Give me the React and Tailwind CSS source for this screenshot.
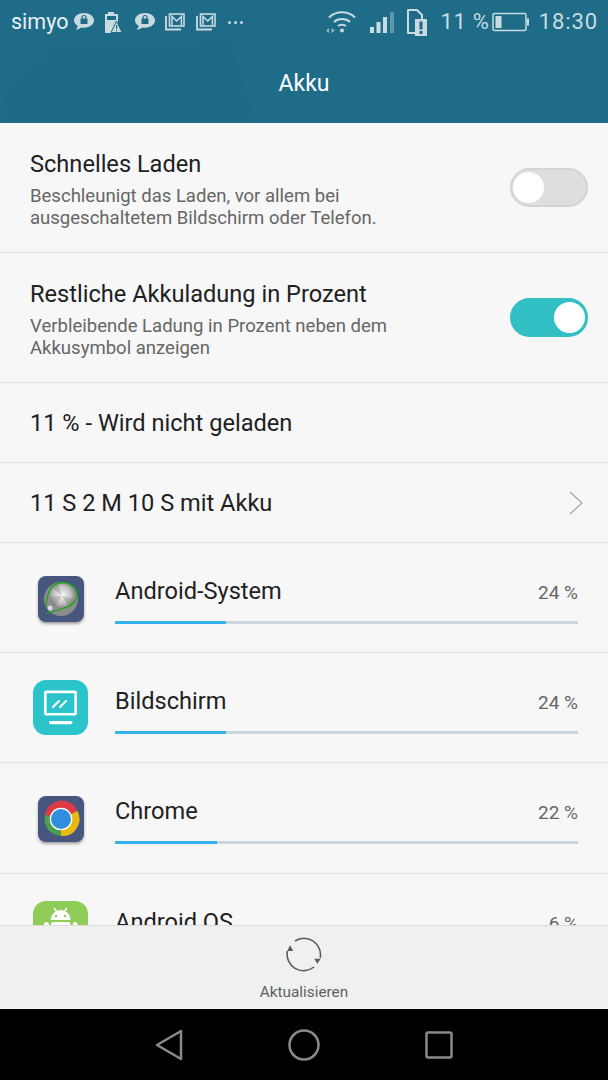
import React from 'react';

const StatusBubble = ({ className }) => (
  <svg width="22" height="20" viewBox="0 0 22 20" className={className}>
    <path d="M11 1C5.500 1 1 4.200 1 8.300c0 2.400 1.500 4.400 3.800 5.700-.3 1.500-1.200 2.700-2.200 3.600 2.200-.2 4.200-1 5.600-2.200 1 .2 1.800.3 2.800.3 5.500 0 10-3.300 10-7.400S16.500 1 11 1z" fill="#c9dbe1" />
    <rect x="7.500" y="6.500" width="7" height="5.500" rx="0.500" fill="#1e6b87" />
    <path d="M9 7V5.500a2 2 0 0 1 4 0V7" fill="none" stroke="#1e6b87" strokeWidth="1.200" />
  </svg>
);

const StatusMail = () => (
  <svg width="20" height="18" viewBox="0 0 20 18" className="mr-[11px]">
    <path d="M1 3v13.500h15" fill="none" stroke="#c9dbe1" strokeWidth="1.800" />
    <rect x="4.500" y="1" width="14.500" height="12" fill="none" stroke="#c9dbe1" strokeWidth="1.600" />
    <path d="M7 12V3.500l4.700 4.500 4.700-4.500V12" fill="none" stroke="#c9dbe1" strokeWidth="1.500" />
  </svg>
);

const StatusBar = () => (
  <div className="flex h-[44px] items-center pl-[11px] pr-[10px]">
    <span className="mr-[5px] text-[21.500px] leading-none text-[#e8f0f3]">simyo</span>
    <StatusBubble className="mr-[9px]" />
    <svg width="18" height="21" viewBox="0 0 18 21" className="mr-[12px]">
      <path d="M4 0h6v2h4v19H1V2h3z" fill="#c9dbe1" />
      <rect x="3" y="4" width="9" height="4" fill="#1e6b87" />
      <path d="M12.500 9l5.500 11.500H7z" fill="#c9dbe1" stroke="#1e6b87" strokeWidth="1" />
      <rect x="12" y="13" width="1.200" height="4" fill="#1e6b87" />
      <rect x="12" y="18" width="1.200" height="1.200" fill="#1e6b87" />
    </svg>
    <StatusBubble className="mr-[9px]" />
    <StatusMail />
    <StatusMail />
    <div className="ml-[1px] flex gap-[3px]">
      <span className="h-[3px] w-[3px] rounded-full bg-[#c9dbe1]" />
      <span className="h-[3px] w-[3px] rounded-full bg-[#c9dbe1]" />
      <span className="h-[3px] w-[3px] rounded-full bg-[#c9dbe1]" />
    </div>
    <div className="flex-1" />
    <svg width="30" height="22" viewBox="0 0 30 22" className="mr-[14px]">
      <path d="M3 6.500C10-.5 22-.5 29 6.500M8 11c4-4 12-4 16 0M12 15c2-1.800 6-1.800 8 0" fill="none" stroke="#c9dbe1" strokeWidth="2" />
      <circle cx="16" cy="19.500" r="2" fill="#c9dbe1" />
      <path d="M3 17v5l-3-2.500zM5.500 17v5l3.500-2.500z" fill="#8fb4c2" />
    </svg>
    <svg width="24" height="21" viewBox="0 0 24 21" className="mr-[12px]">
      <rect x="0" y="15" width="4" height="6" fill="#c9dbe1" />
      <rect x="6.500" y="10" width="4" height="11" fill="#c9dbe1" />
      <rect x="13" y="5" width="4" height="16" fill="#c9dbe1" />
      <rect x="20" y="0" width="4" height="21" fill="#5f98ad" />
    </svg>
    <svg width="21" height="27" viewBox="0 0 21 27" className="mr-[13px]">
      <path d="M2 1h9l5 5v18H2z" fill="#1e6b87" stroke="#c9dbe1" strokeWidth="2" strokeLinejoin="round" />
      <path d="M9 10h12v17H9z" fill="#c9dbe1" />
      <rect x="13.500" y="12.500" width="3" height="8" fill="#1e6b87" />
      <rect x="13.500" y="22" width="3" height="3" fill="#1e6b87" />
    </svg>
    <span className="mr-[2px] text-[22px] leading-none tracking-[0.75px] text-[#c9dbe1]">11 %</span>
    <svg width="38" height="20" viewBox="0 0 38 20" className="mr-[9px]">
      <rect x="1" y="1.500" width="33" height="17" rx="1.500" fill="none" stroke="#c9dbe1" strokeWidth="1.500" />
      <rect x="3.500" y="4" width="6" height="12" fill="#c9dbe1" />
      <rect x="35" y="6.500" width="2" height="7" fill="#c9dbe1" />
    </svg>
    <span className="text-[22px] leading-none tracking-[0.9px] text-[#c9dbe1]">18:30</span>
  </div>
);

const Toggle = ({ on }) => (
  <div className={`flex h-[39px] w-[78px] shrink-0 items-center rounded-full border-2 p-[1px] ${on ? 'justify-end border-[#33c0c5] bg-[#33c0c5]' : 'justify-start border-[#d4d4d4] bg-[#dedede]'}`}>
    <span className="h-[31px] w-[31px] rounded-full bg-white" />
  </div>
);

const SettingRow = ({ title, desc, on }) => (
  <div className="flex h-[130px] shrink-0 items-center border-b border-[#dedede] pl-[30px] pr-[20px]">
    <div className="flex-1 pt-[4px]">
      <div className="text-[23.600px] leading-[28px] text-[#212121]">{title}</div>
      <div className="mt-[7px] text-[18.550px] leading-[22px] text-[#666666]">{desc}</div>
    </div>
    <Toggle on={on} />
  </div>
);

const SystemIcon = () => (
  <div className="ml-[5px] mt-[6px] h-[46px] w-[46px] overflow-hidden rounded-[8px] bg-[#46567f] shadow-[0_2px_3px_rgba(0,0,0,0.35)]">
    <svg width="46" height="46" viewBox="0 0 46 46">
      <defs>
        <radialGradient id="knob" cx="50%" cy="45%" r="60%">
          <stop offset="0%" stopColor="#f8f8f8" />
          <stop offset="55%" stopColor="#c4c4c4" />
          <stop offset="100%" stopColor="#7a7a7a" />
        </radialGradient>
      </defs>
      <circle cx="23" cy="23" r="17" fill="#8c8c8c" />
      <circle cx="24" cy="20" r="12.500" fill="url(#knob)" />
      <path d="M24 20L15 12A12.500 12.500 0 0 1 20 8.200zM24 20L36 23A12.500 12.500 0 0 1 31 30.500zM24 20L17 30.500A12.500 12.500 0 0 1 12 21z" fill="#5e5e5e" opacity="0.25" />
      <path d="M8 31C9 18 12 8 22 7C32 5 39 12 39 19C39 28 30 31 23 33C18 35 12 37 8 37" fill="none" stroke="#16a816" strokeWidth="1.300" />
      <circle cx="12" cy="32" r="2.500" fill="#d8d8d8" />
    </svg>
  </div>
);

const ScreenIcon = () => (
  <div className="h-[55px] w-[55px] rounded-[13px] bg-[#2bc4cb]">
    <svg width="55" height="55" viewBox="0 0 55 55">
      <rect x="12.300" y="11.900" width="30.400" height="22.400" rx="1" fill="none" stroke="white" strokeWidth="2.600" />
      <path d="M20 27l6-6M27 27l6-6" stroke="white" strokeWidth="2" strokeLinecap="round" />
      <rect x="16" y="41" width="23.500" height="3.200" rx="1.600" fill="white" />
    </svg>
  </div>
);

const ChromeIcon = () => (
  <div className="ml-[5px] mt-[6px] h-[46px] w-[46px] overflow-hidden rounded-[8px] bg-[#46567f] shadow-[0_2px_3px_rgba(0,0,0,0.35)]">
    <svg width="46" height="46" viewBox="0 0 46 46">
      <path d="M7 19A17 17 0 0 1 39.500 15L23 23z" fill="#dc3a45" />
      <path d="M39.500 15A17 17 0 0 1 23 40L23 23z" fill="#e8b90f" />
      <path d="M23 40A17 17 0 0 1 7 19L23 23z" fill="#4d9f50" />
      <circle cx="23" cy="23" r="11.300" fill="white" />
      <circle cx="23" cy="23" r="10" fill="#2f8fdc" />
    </svg>
  </div>
);

const AndroidIcon = () => (
  <div className="h-[55px] w-[55px] rounded-[13px] bg-[#8fcc58]">
    <svg width="55" height="55" viewBox="0 0 55 55">
      <path d="M17.700 19a10 10 0 0 1 20 0z" fill="white" />
      <path d="M21 7l3 4M34 7l-3 4" stroke="white" strokeWidth="1.500" />
      <circle cx="23" cy="15" r="1.200" fill="#8fcc58" />
      <circle cx="32" cy="15" r="1.200" fill="#8fcc58" />
      <rect x="18" y="21" width="19.500" height="20" rx="2" fill="white" />
      <rect x="11" y="21" width="5" height="15" rx="2.500" fill="white" />
      <rect x="39.700" y="21" width="5" height="15" rx="2.500" fill="white" />
    </svg>
  </div>
);

const AppRow = ({ icon, name, pct, fill, last, height = 'h-[110px]' }) => (
  <div className={`flex shrink-0 ${height} ${last ? '' : 'border-b border-[#dedede]'}`}>
    <div className="w-[115px] shrink-0 pl-[33px] pt-[27px]">{icon}</div>
    <div className="mr-[30px] flex-1 pt-[33px]">
      <div className="flex items-baseline justify-between">
        <span className="text-[23.600px] leading-[30px] text-[#212121]">{name}</span>
        <span className="text-[19px] leading-[30px] text-[#666666]">{pct}</span>
      </div>
      <div className="mt-[13px] h-[3px] w-full bg-[#c9d6de]">
        <div className="h-full bg-[#34b3ea]" style={{ width: fill }} />
      </div>
    </div>
  </div>
);

export default function App() {
  return (
    <div className="flex h-[1080px] w-[608px] flex-col overflow-hidden bg-[#f7f7f7] font-['Roboto',sans-serif]">
      <div className="relative h-[123px] shrink-0 bg-[#1e6c88]">
        {/* faint wallpaper shape behind the bar */}
        <svg width="608" height="123" viewBox="0 0 608 123" className="absolute left-0 top-0">
          <path d="M3 123V100L28 65H48L52 42H200L208 35H228L240 75L256 123z" fill="#1e6983" />
        </svg>
        <div className="relative">
          <StatusBar />
          <div className="pt-[26px] text-center text-[23px] leading-[28px] text-white">Akku</div>
        </div>
      </div>

      <div className="flex min-h-0 flex-1 flex-col overflow-hidden">
        <SettingRow title="Schnelles Laden" desc={<>Beschleunigt das Laden, vor allem bei<br />ausgeschaltetem Bildschirm oder Telefon.</>} on={false} />
        <SettingRow title="Restliche Akkuladung in Prozent" desc={<>Verbleibende Ladung in Prozent neben dem<br />Akkusymbol anzeigen</>} on={true} />
        <div className="flex h-[80px] shrink-0 items-center border-b border-[#dedede] pl-[30px] pt-[3px] text-[23.600px] text-[#212121]">11 % - Wird nicht geladen</div>
        <div className="flex h-[80px] shrink-0 items-center justify-between border-b border-[#dedede] pl-[30px] pr-[25px] text-[23.600px] text-[#212121]">
          <span className="pt-[3px]">11 S 2 M 10 S mit Akku</span>
          <svg width="14" height="24" viewBox="0 0 14 24">
            <path d="M1 1l12 11L1 23" fill="none" stroke="#a8a8a8" strokeWidth="1.300" />
          </svg>
        </div>
        <AppRow icon={<SystemIcon />} name="Android-System" pct="24 %" fill="24%" />
        <AppRow icon={<ScreenIcon />} name="Bildschirm" pct="24 %" fill="24%" />
        <AppRow icon={<ChromeIcon />} name="Chrome" pct="22 %" fill="22%" height="h-[111px]" />
        <AppRow icon={<AndroidIcon />} name="Android OS" pct="6 %" fill="6%" last />
      </div>

      <div className="flex h-[84px] shrink-0 flex-col items-center border-t border-[#dcdcdc] bg-[#f0f0f0] pt-[10px]">
        <svg width="36" height="36" viewBox="0 0 36 36">
          <path d="M9 5A16.500 16.500 0 0 1 34.200 22M1.400 15A16.500 16.500 0 0 0 28 31" fill="none" stroke="#5c5c5c" strokeWidth="1.600" />
          <path d="M4 9.300L1.300 15H7.300zM28.300 22.700H34.700L31.300 27.700z" fill="#5c5c5c" />
        </svg>
        <span className="mt-[11px] text-[15.300px] leading-[18px] text-[#5f5f5f]">Aktualisieren</span>
      </div>

      <div className="flex h-[71px] shrink-0 items-center justify-between bg-black px-[155px]">
        <svg width="28" height="32" viewBox="0 0 28 32">
          <path d="M26 2v28L2 16z" fill="none" stroke="#8a8a8a" strokeWidth="2.500" strokeLinejoin="round" />
        </svg>
        <svg width="32" height="32" viewBox="0 0 32 32">
          <circle cx="16" cy="16" r="14.500" fill="none" stroke="#8a8a8a" strokeWidth="2.500" />
        </svg>
        <svg width="28" height="28" viewBox="0 0 28 28">
          <rect x="1.500" y="1.500" width="25" height="25" rx="1.500" fill="none" stroke="#8a8a8a" strokeWidth="2.500" />
        </svg>
      </div>
    </div>
  );
}
